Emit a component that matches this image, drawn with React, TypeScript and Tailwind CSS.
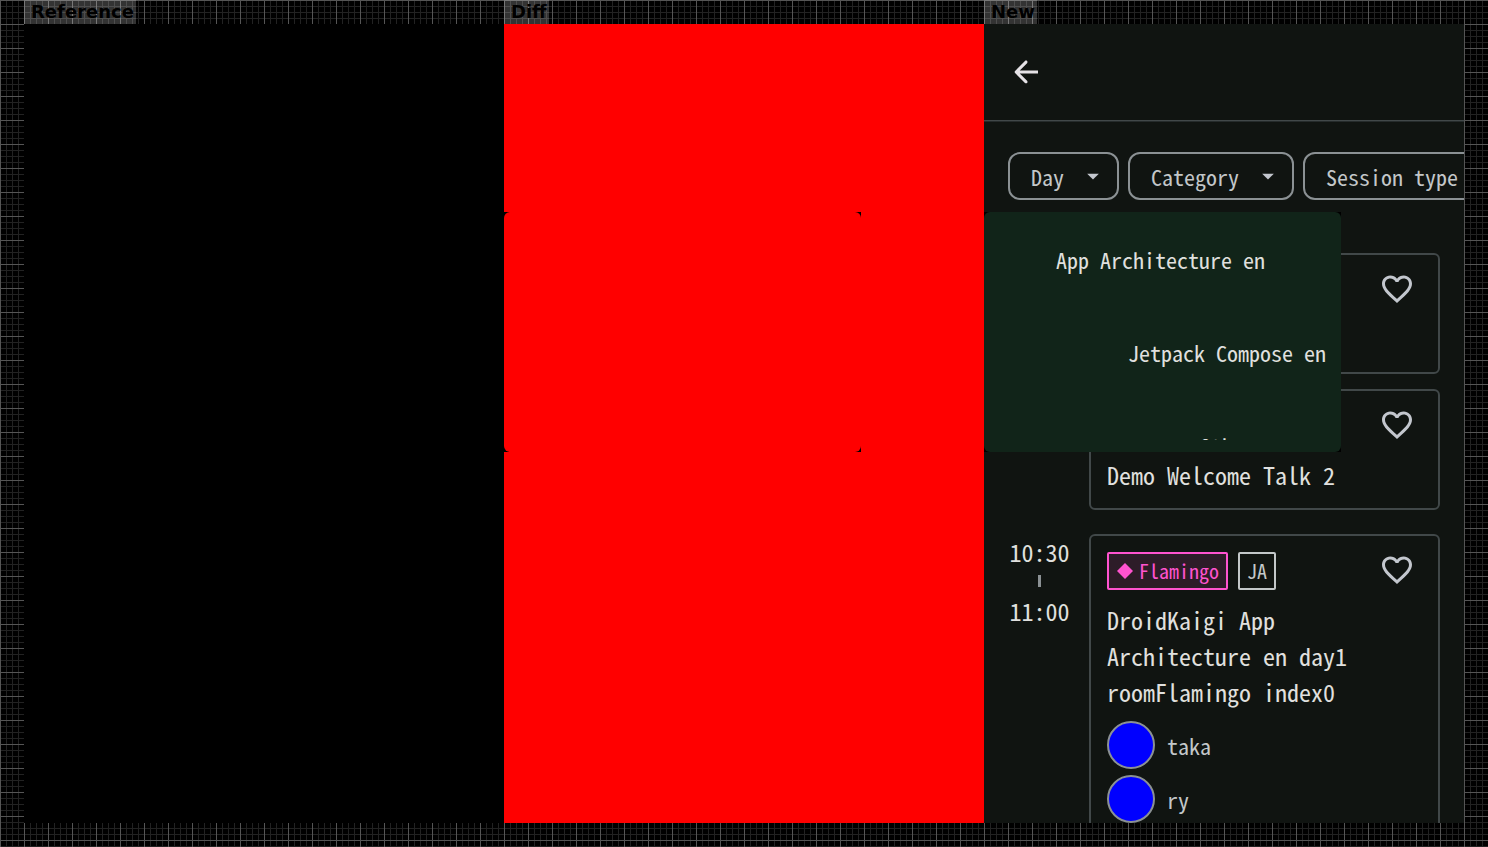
import type { ReactNode } from "react";

function BackIcon() {
  return (
    <svg viewBox="0 0 24 24" className="size-9 fill-[#e5e2e6]" aria-hidden="true">
      <path d="M20 11H7.83l4.88-4.88c.39-.39.39-1.03 0-1.42-.39-.39-1.02-.39-1.41 0l-6.59 6.59c-.39.39-.39 1.02 0 1.41l6.59 6.59c.39.39 1.02.39 1.41 0 .39-.39.39-1.02 0-1.41L7.83 13H20v-2z" />
    </svg>
  );
}

function HeartIcon() {
  return (
    <svg viewBox="0 0 24 24" className="size-9 fill-[#c3c7ce]" aria-hidden="true">
      <path d="M16.5 3c-1.74 0-3.41.81-4.5 2.09C10.91 3.81 9.24 3 7.5 3 4.42 3 2 5.42 2 8.5c0 3.78 3.4 6.86 8.55 11.54L12 21.35l1.45-1.32C18.6 15.36 22 12.28 22 8.5 22 5.42 19.58 3 16.5 3zm-4.4 15.55-.1.1-.1-.1C7.14 14.24 4 11.39 4 8.5 4 6.5 5.5 5 7.5 5c1.54 0 3.04.99 3.57 2.36h1.87C13.46 5.99 14.96 5 16.5 5c2 0 3.5 1.5 3.5 3.5 0 2.89-3.14 5.74-7.9 10.05z" />
    </svg>
  );
}

function CaretIcon() {
  return (
    <svg viewBox="0 0 24 24" className="size-7 shrink-0 fill-[#c3c7ce]" aria-hidden="true">
      <path d="M7 10l5 5 5-5z" />
    </svg>
  );
}

function Chip({ label }: { label: string }) {
  return (
    <button
      type="button"
      className="flex h-12 shrink-0 items-center gap-[15px] rounded-xl border-2 border-[#8b9194] pr-2.5 pl-[21px] text-[22px] leading-9 text-[#c3c7c9]"
    >
      {label}
      <CaretIcon />
    </button>
  );
}

function Card({ tags, title, children }: { tags?: ReactNode; title?: string; children?: ReactNode }) {
  return (
    <article className="rounded-md border-2 border-[#414849] px-4 pt-4 pb-[15px]">
      <div className="flex h-[38px] items-start justify-between pr-[7px]">
        <div className="flex h-full gap-2.5">{tags}</div>
        <button type="button" aria-label="Favorite">
          <HeartIcon />
        </button>
      </div>
      <h2 className="mt-3 min-h-9 max-w-[252px] text-2xl leading-9 text-[#e0e0df]">{title}</h2>
      {children}
    </article>
  );
}

function Speaker({ name }: { name: string }) {
  return (
    <li className="flex items-center gap-3 text-[22px] text-[#c3c7c9]">
      <span className="size-12 rounded-full border-2 border-[#8b9194] bg-[#0000ff]" />
      {name}
    </li>
  );
}

function Label({ children }: { children: string }) {
  return (
    <div className="h-6">
      <span className="inline-block h-6 bg-white/20 pr-0.5 pl-[7px] align-top font-['DejaVu_Sans',sans-serif] text-lg leading-6 font-bold text-black">
        {children}
      </span>
    </div>
  );
}

function CategoryMenu() {
  return (
    <div className="absolute top-full left-0 z-10 w-[357px] bg-black">
      <div className="rounded-md bg-[#112419] py-3">
        <ul className="flex h-[216px] flex-col gap-[57px] overflow-hidden pt-[17px] text-[22px] leading-9 whitespace-nowrap text-[#e0e0df]">
          <li className="shrink-0 pl-[72px]">App Architecture en</li>
          <li className="shrink-0 pl-36">Jetpack Compose en</li>
          <li className="shrink-0 pl-54">Other en</li>
        </ul>
      </div>
    </div>
  );
}

function SearchScreen() {
  return (
    <section className="flex min-h-0 flex-1 flex-col overflow-hidden bg-[#101411] font-['Noto_Sans_Mono_CJK_JP','Noto_Sans_CJK_JP',monospace]">
      <header className="shrink-0 border-b border-[#414849] px-6 py-[30px] shadow-[0_1px_#252b2b]">
        <button type="button" aria-label="Back" className="block">
          <BackIcon />
        </button>
      </header>
      <div className="relative shrink-0 pt-[31px] pb-3">
        <div className="flex gap-[9px] overflow-hidden pl-6">
          <Chip label="Day" />
          <Chip label="Category" />
          <Chip label="Session type" />
        </div>
        <CategoryMenu />
      </div>
      <div className="mt-[41px] flex flex-col gap-6 px-6">
        <div className="flex flex-col gap-[15px] pl-[81px]">
          <Card />
          <Card title="Demo Welcome Talk 2" />
        </div>
        <div className="flex gap-[18px]">
          <div className="flex w-[63px] shrink-0 flex-col items-center text-2xl leading-9 text-[#e0e0df]">
            <time>10:30</time>
            <span className="mt-[5px] mb-1.5 h-3 w-[3px] bg-[#8b9194]" />
            <time>11:00</time>
          </div>
          <div className="min-w-0 flex-1">
            <Card
              title="DroidKaigi App Architecture en day1 roomFlamingo index0"
              tags={
                <>
                  <span className="flex items-center gap-1.5 rounded-xs border-2 border-[#ff53cf] bg-[#ff53cf]/12 pr-[7px] pl-2 text-xl text-[#ff53cf]">
                    <svg viewBox="0 0 16 16" className="size-4 fill-current" aria-hidden="true">
                      <path d="M8 0l8 8-8 8-8-8z" />
                    </svg>
                    Flamingo
                  </span>
                  <span className="flex items-center rounded-xs border-2 border-[#c3c7c9] px-[7px] text-xl text-[#c3c7c9]">
                    JA
                  </span>
                </>
              }
            >
              <ul className="mt-[11px] flex flex-col gap-1.5">
                <Speaker name="taka" />
                <Speaker name="ry" />
              </ul>
            </Card>
          </div>
        </div>
      </div>
    </section>
  );
}

export default function App() {
  return (
    <main className="grid h-screen grid-cols-3 overflow-hidden bg-black bg-[linear-gradient(to_right,#555_1px,transparent_1px),linear-gradient(to_bottom,#555_1px,transparent_1px),linear-gradient(to_right,#222_1px,transparent_1px),linear-gradient(to_bottom,#222_1px,transparent_1px)] bg-[size:24px_24px,24px_24px,6px_6px,6px_6px] px-6 pb-6">
      <div className="flex min-h-0 flex-col">
        <Label>Reference</Label>
        <div className="flex-1 bg-black" />
      </div>
      <div className="flex min-h-0 flex-col">
        <Label>Diff</Label>
        <div className="flex-1 bg-[#ff0000] pt-[188px]">
          <div className="w-[357px] bg-black">
            <div className="h-60 rounded-md bg-[#ff0000]" />
          </div>
        </div>
      </div>
      <div className="flex min-h-0 flex-col">
        <Label>New</Label>
        <SearchScreen />
      </div>
    </main>
  );
}
